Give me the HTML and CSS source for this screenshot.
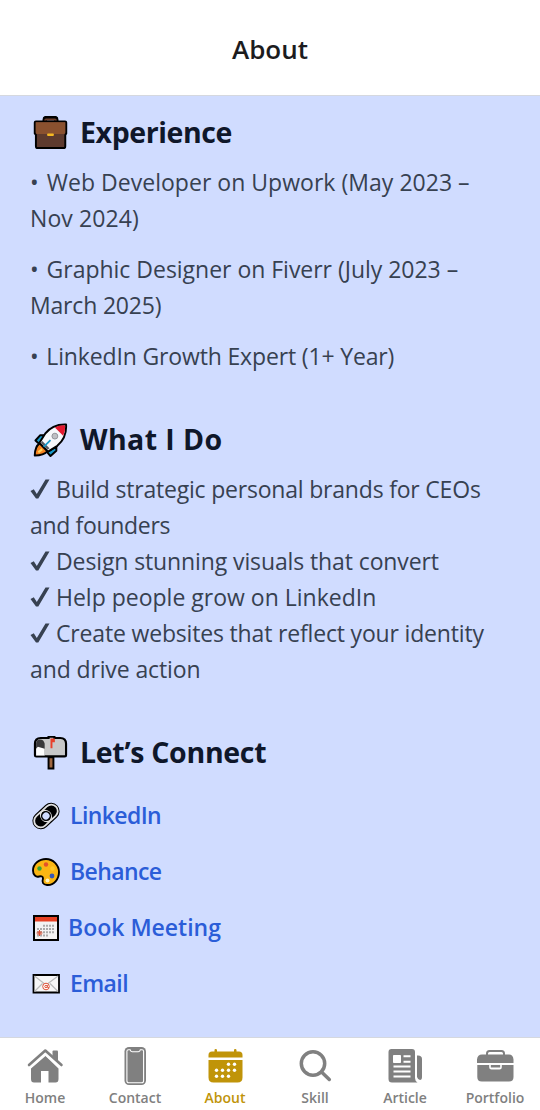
FILE: index.html
```html
<!DOCTYPE html>
<html lang="en">
<head>
<meta charset="utf-8">
<title>About</title>
<link rel="stylesheet" href="styles.css">
</head>
<body>
<header class="topbar"><h1>About</h1></header>
<main class="content">
  <section class="section experience">
    <h2><svg class="emoji" viewBox="0 0 36 36"><path d="M12 6V4q0-2 2-2h8q2 0 2 2v2" fill="none" stroke="#000" stroke-width="4.5"/><path d="M12.5 6V4.5q0-1 1-1h9q1 0 1 1V6" fill="none" stroke="#6f3f2b" stroke-width="2"/><path d="M3 5.5h30q1.2 0 1.2 1.2V18l-1 1.5V31q0 2-2 2H5q-2 0-2-2V19.500L1.800 18V6.700Q1.800 5.500 3 5.500z" fill="#5d3a2e" stroke="#000" stroke-width="2"/><path d="M2.800 6.500h30.400v10.500q0 1.500-1.500 1.500H4.300q-1.500 0-1.500-1.500z" fill="#8a512f"/><rect x="14.500" y="18" width="7" height="2.500" rx="1" fill="#f5b923"/></svg><span>Experience</span></h2>
    <div class="copy">
      <p><span class="l1"><span class="dot">•</span> Web Developer on Upwork (May 2023 –</span><br><span class="l2">Nov 2024)</span></p>
      <p><span class="l3"><span class="dot">•</span> Graphic Designer on Fiverr (July 2023 –</span><br><span class="l4">March 2025)</span></p>
      <p><span class="l5"><span class="dot">•</span> LinkedIn Growth Expert (1+ Year)</span></p>
    </div>
  </section>
  <section class="section services">
    <h2><svg class="emoji" viewBox="0 0 36 36"><path d="M12 12.500H7.500L2.500 18l4 3.500zM24 24v4.500L18 34l-3.500-4z" fill="#1799c9" stroke="#000" stroke-width="2" stroke-linejoin="round"/><path d="M7 21Q2 24 1.800 33.500 11 33.500 15 29z" fill="#f58220" stroke="#000" stroke-width="2" stroke-linejoin="round"/><path d="M5 29l4-3 1 2-4 3z" fill="#ffd45a"/><path d="M34 1.500Q20 1 12.500 11L6.500 20.500 15.500 29.500 25 23.500Q35 15 34 1.500z" fill="#f7f8fb" stroke="#000" stroke-width="2" stroke-linejoin="round"/><path d="M33 2.500Q27 2 22.500 4.500L31 13Q33.500 8 33 2.500z" fill="#e3192f"/><path d="M8 20.500l7 7 2-1.500-7.500-7.500z" fill="#555b63"/><path d="M11 24.500l7-7" stroke="#1799c9" stroke-width="1.800"/><circle cx="22.500" cy="13.500" r="3" fill="#bfc0c4" stroke="#929399"/></svg><span>What I Do</span></h2>
    <div class="copy">
      <div class="item"><svg class="check" viewBox="0 0 20 22"><path d="M.5 13l3.300-1.800 3 4.800L15.500 1.500h4L8.300 20.500H6z"/></svg><span class="s1">Build strategic personal brands for CEOs</span></div>
      <div><span class="s2">and founders</span></div>
      <div class="item"><svg class="check" viewBox="0 0 20 22"><path d="M.5 13l3.300-1.800 3 4.800L15.500 1.500h4L8.300 20.500H6z"/></svg><span class="s3">Design stunning visuals that convert</span></div>
      <div class="item"><svg class="check" viewBox="0 0 20 22"><path d="M.5 13l3.300-1.800 3 4.800L15.500 1.500h4L8.300 20.500H6z"/></svg><span class="s4">Help people grow on LinkedIn</span></div>
      <div class="item"><svg class="check" viewBox="0 0 20 22"><path d="M.5 13l3.300-1.800 3 4.800L15.500 1.500h4L8.300 20.500H6z"/></svg><span class="s5">Create websites that reflect your identity</span></div>
      <div><span class="s6">and drive action</span></div>
    </div>
  </section>
  <section class="section connect">
    <h2><svg class="emoji" viewBox="0 0 36 36"><path d="M16 22h5v11.500h-5z" fill="#a0673f" stroke="#000" stroke-width="2"/><path d="M8 2h8V.800h6V2h6q6 0 6 6v11.500q0 1.500-1.500 1.500h-29Q2 21 2 19.500V8q0-6 6-6z" fill="#c8c8c8" stroke="#000" stroke-width="2.200"/><path d="M3.200 20V8q0-4.500 4-4.500T12 8v12z" fill="#38383a"/><path d="M5 11l7 2v7H3.200v-7z" fill="#fff"/><path d="M18 2.500h4.500v4H20v6h-2z" fill="#e8402a"/></svg><span>Let’s Connect</span></h2>
    <nav class="links">
      <a class="k1"><svg viewBox="0 0 28 28"><g transform="rotate(-43 14 14)" fill="none"><rect x="-1.500" y="5.500" width="31" height="17" rx="8.500" fill="#000"/><rect x=".300" y="7.500" width="18.500" height="13" rx="6.500" stroke="#e1e1e1" stroke-width="1.800"/><rect x="9.200" y="7.500" width="18.500" height="13" rx="6.500" stroke="#e1e1e1" stroke-width="1.800"/><circle cx="14" cy="14" r="4.300" fill="#d0dcff" stroke="#000" stroke-width="1.500"/></g></svg><span>LinkedIn</span></a>
      <a class="k2"><svg viewBox="0 0 28 28"><path d="M14 1C7 1 1 6 1 12.500 1 17 4 19.500 7 18.500q4-1 4 2-2 6 4 6.500c7 .5 12-6 12-13S21 1 14 1z" fill="#fbb613" stroke="#000" stroke-width="1.900"/><circle cx="14" cy="6.500" r="2.200" fill="#e3532b"/><circle cx="7.500" cy="10.500" r="2.200" fill="#38a336"/><circle cx="20.500" cy="10.500" r="2.200" fill="#ffc928"/><circle cx="20" cy="18" r="2.400" fill="#3857b5"/><circle cx="15.500" cy="22.500" r="2" fill="#fff2bf"/></svg><span>Behance</span></a>
      <a class="k3"><svg viewBox="0 0 28 28"><path d="M2 2h24v24H2z" fill="#f3f3f3" stroke="#000" stroke-width="2"/><path d="M3 3h22v4.500H3z" fill="#e64023"/><path d="M11 11.800h12M5 15h18M5 18.200h18M5 21.400h12" stroke="#aaa" stroke-width="2" stroke-dasharray="2 1"/><path d="M7.500 16v6M4.500 19h6M5.500 17l4 4M9.500 17l-4 4" stroke="#e05236" stroke-width="1"/></svg><span>Book Meeting</span></a>
      <a class="k4"><svg viewBox="0 0 28 28"><path d="M1.500 5h25.500v17.500H1.500z" fill="#f7f7f7" stroke="#000" stroke-width="1.800"/><path d="M2.500 6l11.500 9 12-9M2.500 21.500l8-8M26 21.500l-8-8" fill="none" stroke="#bbb" stroke-width="1.200"/><circle cx="14" cy="16.500" r="3.300" fill="#fff" stroke="#df5138" stroke-width="1"/><circle cx="14" cy="16.500" r="1.200" fill="none" stroke="#df5138"/><path d="M15.500 15v2.500h1.500" fill="none" stroke="#df5138" stroke-width=".8"/></svg><span>Email</span></a>
    </nav>
  </section>
</main>
<footer class="tabs">
  <a class="tab"><svg viewBox="0 0 40 40"><path d="M20.500 10L6 22.500v10.500q0 3.500 3 3.500h7V25h7.500v11.500h7q3 0 3-3.500V22.500z"/><path d="M27.500 5.500q0-1 1-1H32q1 0 1 1v12L27.500 12z"/><path d="M5 21L20.300 7.500 35.500 21" fill="none" stroke="#fff" stroke-width="3"/><path d="M4 19L20.300 4.500 36.500 19" fill="none" stroke="currentColor" stroke-width="2.600" stroke-linecap="round" stroke-linejoin="round"/></svg><span>Home</span></a>
  <a class="tab"><svg viewBox="0 0 40 40"><rect x="9.500" y="1" width="21.500" height="38" rx="4.500"/><path d="M13.500 3.700h1.600q.4 2 2 2h6.300q1.600 0 2-2H27q1.600 0 1.600 1.600v29.400q0 2.100-2.100 2.100H14q-2.100 0-2.100-2.100V5.300q0-1.600 1.600-1.600z" fill="none" stroke="#fff" stroke-width="1.100"/></svg><span>Contact</span></a>
  <a class="tab active"><svg viewBox="0 0 40 40"><path d="M3.500 11.500V9q0-3.500 3.500-3.500h2.500V4q0-1 1.200-1T12 4v1.500h17V4q0-1 1.200-1T31.500 4v1.500H34q3.500 0 3.500 3.500v2.500zM3.500 14h34v17.500q0 5-5 5h-24q-5 0-5-5z"/><g fill="#fff"><circle cx="23.500" cy="18.300" r="1.700"/><circle cx="29.500" cy="18.300" r="1.700"/><circle cx="11.500" cy="24.300" r="1.700"/><circle cx="17.500" cy="24.300" r="1.700"/><circle cx="23.500" cy="24.300" r="1.700"/><circle cx="29.500" cy="24.300" r="1.700"/><circle cx="11.500" cy="30.200" r="1.700"/><circle cx="17.500" cy="30.200" r="1.700"/><circle cx="23.500" cy="30.200" r="1.700"/></g></svg><span>About</span></a>
  <a class="tab"><svg viewBox="0 0 40 40"><g fill="none" stroke="currentColor" stroke-width="3.500"><circle cx="18" cy="17.500" r="11.700"/><path d="M26.500 26l7.800 7.500" stroke-linecap="round"/></g></svg><span>Skill</span></a>
  <a class="tab"><svg viewBox="0 0 40 40"><path d="M6.500 3h20.500q3 0 3 3v26q0 3 2.500 4.500H7Q3.500 36.500 3.500 33V6q0-3 3-3zM32 9.500h1q4 0 4 3.500v18q0 3-2 3t-3-3z"/><path d="M18.500 10.300h7M18.500 15.700h7M8.500 20.500h17M8.500 25.500h17M8.500 30.500h17" fill="none" stroke="#fff" stroke-width="1.900"/><path d="M8.500 9.500h7v7h-7z" fill="#fff" stroke="#fff"/></svg><span>Article</span></a>
  <a class="tab"><svg viewBox="0 0 40 40"><path d="M12 9V7.500Q12 5 14.500 5h12Q29 5 29 7.500V9" fill="none" stroke="currentColor" stroke-width="2"/><path d="M7 8.500h27q4 0 4.500 5v3.500H2v-3.500q.5-5 5-5zM2.300 19h11.900v2.200q0 2.300 2.300 2.300h8q2.300 0 2.300-2.300V19h11.700v12q0 4.500-4.500 4.500H6.800q-4.500 0-4.500-4.500z"/><path d="M15.800 19h9.400v2.500h-9.400z"/></svg><span>Portfolio</span></a>
</footer>
</body>
</html>
```
FILE: styles.css
```css
* { box-sizing: border-box; }
body {
  margin: 0;
  height: 1110px;
  display: flex;
  flex-direction: column;
  background: #d0dcff;
  font-family: "Open Sans", "Noto Sans", sans-serif;
  white-space: nowrap;
}
.topbar {
  height: 96px;
  display: flex;
  align-items: center;
  justify-content: center;
  padding-top: 2px;
  background: #fff;
  border-bottom: 1px solid #d5d8df;
}
h1 { margin: 0; font-size: 26px; font-weight: 600; color: #1c1c1e; }
.content { flex: 1; padding: 17px 30px 0; }
.section h2 {
  display: flex;
  align-items: center;
  gap: 12px;
  height: 40px;
  margin: 0;
  padding-left: 3px;
  font-size: 28.5px;
  font-weight: 700;
  color: #0f172a;
}
.section h2 span { margin-top: -2px; }
.experience h2 { letter-spacing: -0.4px; }
.services h2 { letter-spacing: 0.4px; }
.connect h2 { letter-spacing: -0.3px; }
.emoji { width: 35px; height: 35px; }
.copy { margin-top: 11px; font-size: 23px; line-height: 36px; color: #374151; }
.copy p { margin: 0 0 15px; }
.dot { margin-right: 2px; }
.l1 { letter-spacing: 0.03px; }
.l2 { letter-spacing: 0.1px; }
.l3 { letter-spacing: -0.02px; }
.l4 { letter-spacing: -0.18px; }
.l5 { letter-spacing: -0.15px; }
.s1 { letter-spacing: -0.2px; }
.s2 { letter-spacing: -0.33px; }
.s3 { letter-spacing: -0.11px; }
.s5 { letter-spacing: -0.17px; }
.s6 { letter-spacing: -0.12px; }
.services { padding-top: 31px; }
.item { display: flex; align-items: center; gap: 6px; }
.check { width: 20px; height: 22px; fill: #374151; }
.connect { padding-top: 46px; }
.links { margin-top: 15px; }
.links a {
  display: flex;
  align-items: center;
  gap: 10px;
  height: 56px;
  padding-left: 2px;
  font-size: 23px;
  font-weight: 600;
  letter-spacing: -0.6px;
  color: #2b5dd8;
}
.links .k3 { gap: 8px; letter-spacing: 0; }
.links a span { margin-top: -2px; }
.links svg { width: 28px; height: 28px; overflow: visible; }
.tabs {
  height: 73px;
  display: grid;
  grid-template-columns: repeat(6, 1fr);
  background: #fff;
  border-top: 1px solid #d5d8df;
}
.tab {
  display: flex;
  flex-direction: column;
  align-items: center;
  padding-top: 8px;
  font-size: 14px;
  font-weight: 600;
  line-height: 23px;
  color: #808080;
}
.tab svg { width: 40px; height: 40px; fill: currentColor; }
.tab.active { color: #c09409; }
```
